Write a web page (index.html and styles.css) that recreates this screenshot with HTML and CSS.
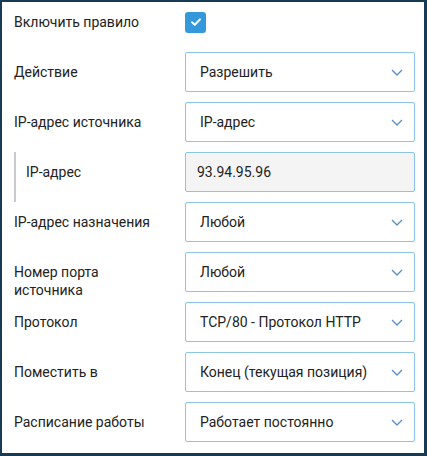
FILE: index.html
```html
<!DOCTYPE html>
<html lang="ru">
<head>
<meta charset="utf-8">
<link rel="stylesheet" href="styles.css">
</head>
<body>
<div class="panel">
  <div class="row">
    <div class="label">Включить правило</div>
    <div class="control">
      <span class="checkbox">
        <svg viewBox="0 0 20 20" width="20" height="20"><path d="M6 10.2 L8.8 12.8 L14 7.4" fill="none" stroke="#fff" stroke-width="2" stroke-linecap="round" stroke-linejoin="round"/></svg>
      </span>
    </div>
  </div>
  <div class="row">
    <div class="label">Действие</div>
    <div class="select"><span>Разрешить</span><svg class="chev" viewBox="0 0 12 7" width="12" height="7"><path d="M1 1 L6 6 L11 1" fill="none" stroke="#5d8fc6" stroke-width="1.4"/></svg></div>
  </div>
  <div class="row">
    <div class="label">IP-адрес источника</div>
    <div class="select"><span>IP-адрес</span><svg class="chev" viewBox="0 0 12 7" width="12" height="7"><path d="M1 1 L6 6 L11 1" fill="none" stroke="#5d8fc6" stroke-width="1.4"/></svg></div>
  </div>
  <div class="row sub">
    <div class="label">IP-адрес</div>
    <div class="input">93.94.95.96</div>
  </div>
  <div class="row">
    <div class="label">IP-адрес назначения</div>
    <div class="select"><span>Любой</span><svg class="chev" viewBox="0 0 12 7" width="12" height="7"><path d="M1 1 L6 6 L11 1" fill="none" stroke="#5d8fc6" stroke-width="1.4"/></svg></div>
  </div>
  <div class="row">
    <div class="label">Номер порта<br>источника</div>
    <div class="select"><span>Любой</span><svg class="chev" viewBox="0 0 12 7" width="12" height="7"><path d="M1 1 L6 6 L11 1" fill="none" stroke="#5d8fc6" stroke-width="1.4"/></svg></div>
  </div>
  <div class="row">
    <div class="label">Протокол</div>
    <div class="select"><span>TCP/80 - Протокол HTTP</span><svg class="chev" viewBox="0 0 12 7" width="12" height="7"><path d="M1 1 L6 6 L11 1" fill="none" stroke="#5d8fc6" stroke-width="1.4"/></svg></div>
  </div>
  <div class="row">
    <div class="label">Поместить в</div>
    <div class="select"><span>Конец (текущая позиция)</span><svg class="chev" viewBox="0 0 12 7" width="12" height="7"><path d="M1 1 L6 6 L11 1" fill="none" stroke="#5d8fc6" stroke-width="1.4"/></svg></div>
  </div>
  <div class="row">
    <div class="label">Расписание работы</div>
    <div class="select"><span>Работает постоянно</span><svg class="chev" viewBox="0 0 12 7" width="12" height="7"><path d="M1 1 L6 6 L11 1" fill="none" stroke="#5d8fc6" stroke-width="1.4"/></svg></div>
  </div>
</div>
</body>
</html>
```
FILE: styles.css
```css
html, body {
  margin: 0;
  padding: 0;
  background: #173a55;
}
.panel {
  box-sizing: border-box;
  width: 427px;
  height: 456px;
  background: #fff;
  border-style: solid;
  border-color: #173a55;
  border-width: 2px 3px 3px 2px;
  padding: 0 9px 0 12px;
  display: flex;
  flex-direction: column;
  gap: 10px;
  font-family: Roboto, "Noto Sans", sans-serif;
  font-size: 14px;
  color: #222;
}
.row {
  display: flex;
  height: 40px;
}
.label {
  width: 171px;
  flex: none;
  box-sizing: border-box;
  padding-top: 11px;
  line-height: 18px;
}
.sub .label {
  border-left: 2px solid #c9c9cd;
  padding-left: 10px;
  height: 50px;
}
.control {
  display: flex;
  align-items: center;
}
.checkbox {
  width: 21px;
  height: 21px;
  border-radius: 3px;
  background: #3498db;
  display: flex;
  align-items: center;
  justify-content: center;
}
.checkbox svg {
  display: block;
}
.select, .input {
  box-sizing: border-box;
  flex: none;
  width: 230px;
  height: 40px;
  border: 1px solid #8cc4ea;
  border-radius: 2px;
  display: flex;
  align-items: center;
}
.select {
  padding: 0 11px 0 14px;
  justify-content: space-between;
}
.input {
  padding: 0 11px;
  background: #f4f4f4;
}
.chev {
  display: block;
}
```
